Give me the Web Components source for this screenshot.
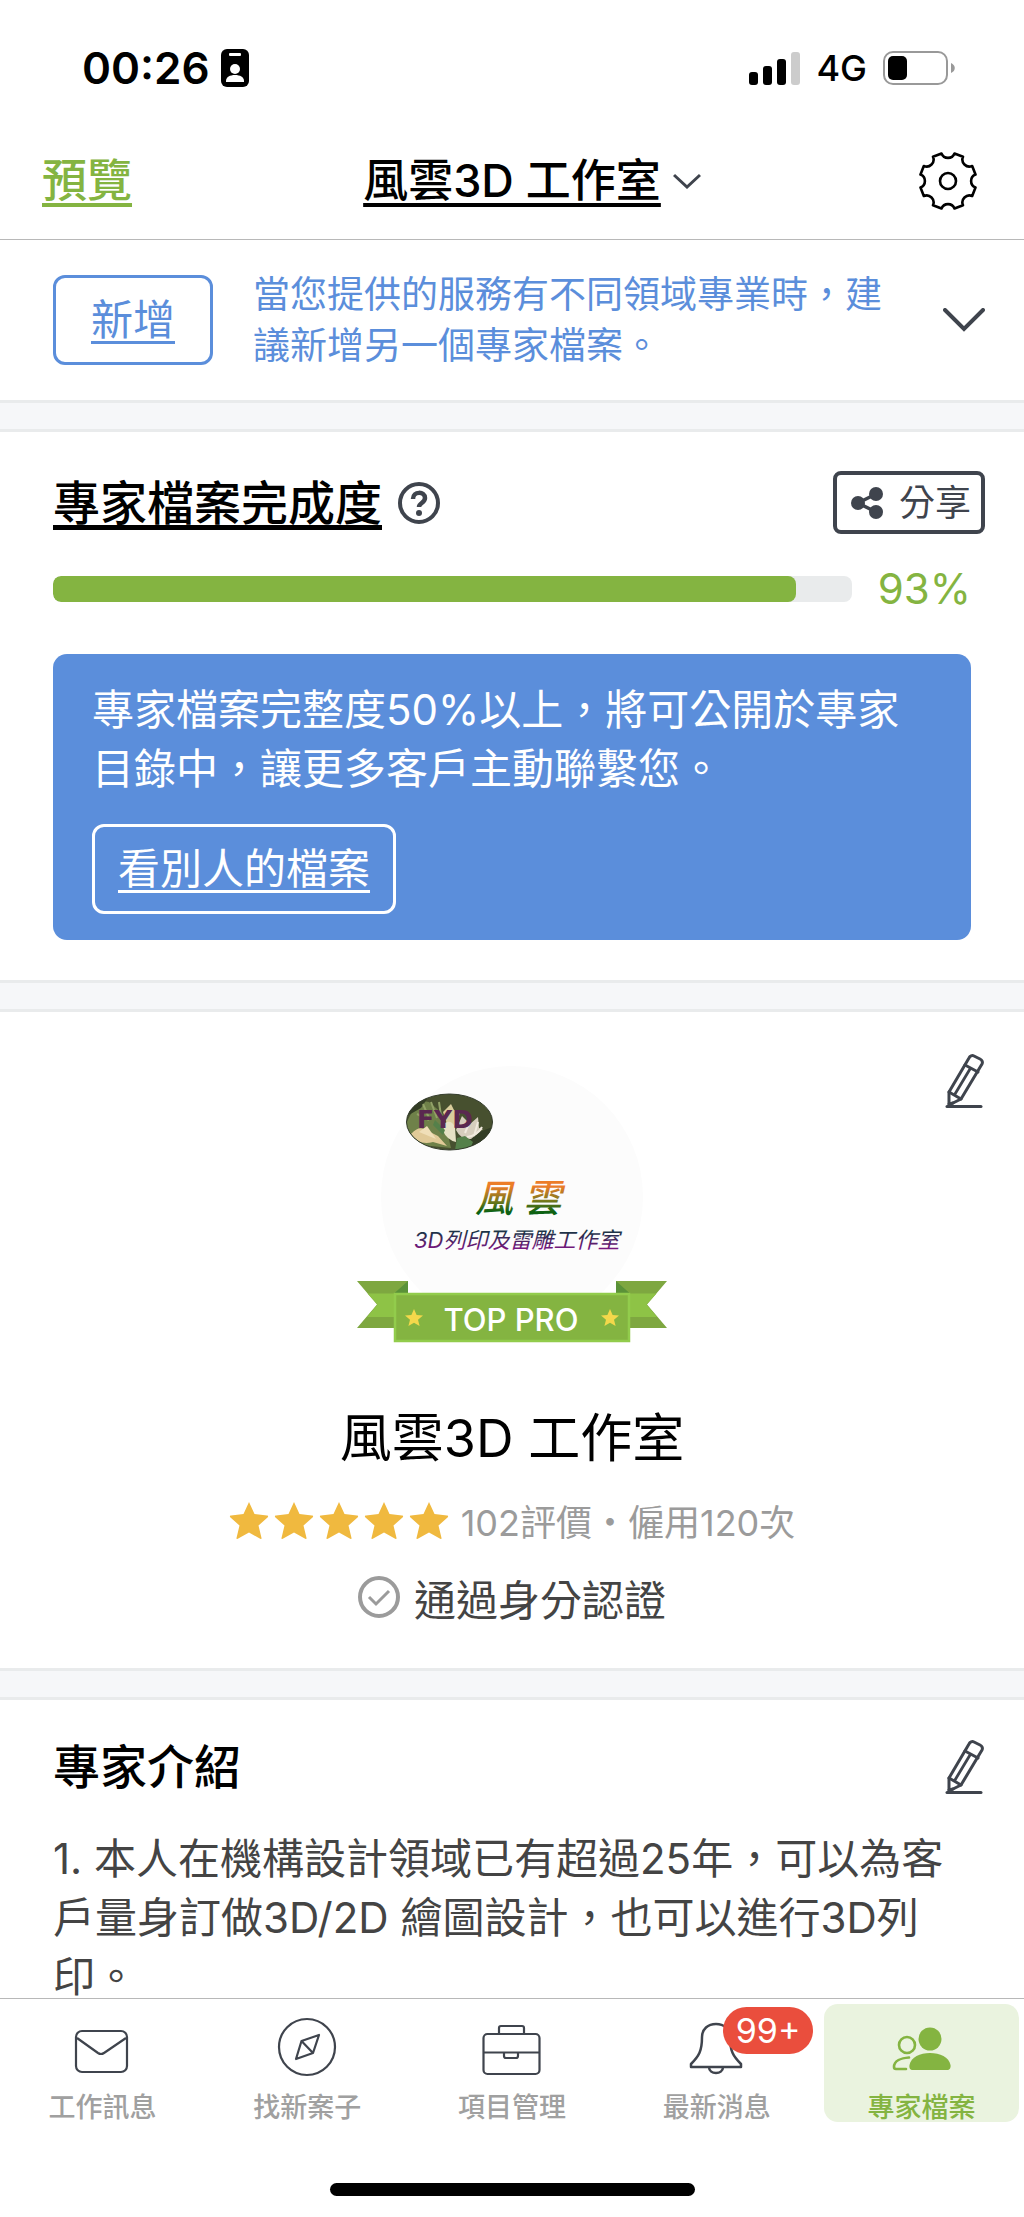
<!DOCTYPE html>
<html lang="zh-Hant">
<head>
<meta charset="utf-8">
<meta name="viewport" content="width=device-width, initial-scale=1">
<title>專家檔案</title>
<style>
    :root {
        --green: #84b441;
        --blue: #5b8edb;
        --dark: #3f444d;
        --text: #444;
        --muted: #9b9b9b;
    }
    body {
        margin: 0;
        background: #fff;
        color: #000;
        font-family: Inter, "Noto Sans CJK TC", sans-serif;
    }
</style>
</head>
<body>
<pro-app></pro-app>

<script>
// 圖示：[寬, 高, 內容]
const ICONS = {
    badge: [28, 38, `
        <rect width="28" height="38" rx="6" fill="#000"/>
        <rect x="8" y="4" width="12" height="3" rx="1" fill="#fff"/>
        <ellipse cx="14" cy="20" rx="5" ry="5" fill="#fff"/>
        <path d="M5 33v-1c0-4 4-6 9-6s9 2 9 6v1z" fill="#fff"/>`],
    signal: [51, 33, `
        <rect y="20" width="9" height="13" rx="3"/>
        <rect x="14" y="14" width="9" height="19" rx="3"/>
        <rect x="28" y="7" width="9" height="26" rx="3"/>
        <rect x="42" y="0" width="9" height="33" rx="3" fill="#ccc"/>`],
    battery: [72, 34, `
        <rect x="1" y="1" width="63" height="32" rx="9" fill="none" stroke="#999" stroke-width="2"/>
        <rect x="5" y="5" width="19" height="24" rx="5"/>
        <path d="M68 12c5 2 5 8 0 10z" fill="#999"/>`],
    chevron: [28, 16, `<path d="M1 2l13 12L27 2" fill="none" stroke="#3f444d" stroke-width="3"/>`],
    chevronBig: [42, 24, `<path d="M2 2l19 19L40 2" fill="none" stroke="#3f444d" stroke-width="4" stroke-linecap="round"/>`],
    gear: [58, 58, `
        <g transform="translate(29 29)" fill="none" stroke="#000" stroke-width="2.6" stroke-linejoin="round">
            <path d="M6.5-27.5L15-24.2A7 7 0 0 0 24.2-15L27.5-6.5A7 7 0 0 0 27.5 6.5L24.2 15A7 7 0 0 0 15 24.2L6.5 27.5A7 7 0 0 0-6.5 27.5L-15 24.2A7 7 0 0 0-24.2 15L-27.5 6.5A7 7 0 0 0-27.5-6.5L-24.2-15A7 7 0 0 0-15-24.2L-6.5-27.5A7 7 0 0 0 6.5-27.5z"/>
            <circle r="8"/>
        </g>`],
    help: [42, 42, `
        <circle cx="21" cy="21" r="19" fill="none" stroke="#3f444d" stroke-width="4"/>
        <path d="M15 17c0-8 12-8 12-1 0 5-6 5-6 9" fill="none" stroke="#3f444d" stroke-width="4.5"/>
        <circle cx="21" cy="31" r="3" fill="#3f444d"/>`],
    share: [32, 34, `
        <path d="M25 8L7 17l18 9" fill="none" stroke="#3f444d" stroke-width="3.5"/>
        <g fill="#3f444d"><circle cx="7" cy="17" r="7"/><circle cx="25" cy="8" r="7"/><circle cx="25" cy="26" r="7"/></g>`],
    pencil: [40, 54, `
        <g fill="none" stroke="#3f444d" stroke-width="3" stroke-linejoin="round" stroke-linecap="round">
            <path d="M4 51V38L24 4c1-2 3-3 5-2l6 3c2 1 3 3 2 5L16 45z"/>
            <path d="M20 11l13 7M4 38l12 7M4 50l4-1"/>
            <path d="M10 40l15-25" stroke-width="2.800"/>
            <path d="M2 52.500h34"/>
        </g>`],
    star: [40, 38, `<path d="M20 1l5.500 12L38 14.500c1 0 1.500 1 .8 1.700L29.500 24.500 32.500 37c.2 1-.5 1.300-1.300.8L20 31.500 8.800 37.800c-.8.500-1.500.2-1.300-.8l3-12.500L1.200 16.200C.5 15.500 1 14.500 2 14.500L14.500 13z" fill="#f0b93f"/>`],
    check: [42, 42, `
        <g fill="none" stroke="#9b9b9b" stroke-width="4"><circle cx="21" cy="21" r="19"/></g>
        <path d="M11 21l7 7 13-13" fill="none" stroke="#9b9b9b" stroke-width="3"/>`],
    mail: [60, 60, `
        <g fill="none" stroke="#3f444d" stroke-width="2.200">
            <rect x="4" y="14" width="51" height="41" rx="6"/>
            <path d="M5 21l21 15q3 2 6 0l22-15"/>
        </g>`],
    compass: [60, 60, `
        <g fill="none" stroke="#3f444d" stroke-width="2.200" stroke-linejoin="round">
            <circle cx="30" cy="30" r="28"/>
            <path d="M42 18l-6 18-17 6 5.500-18zM24.500 24L36 36"/>
        </g>`],
    briefcase: [60, 60, `
        <g fill="none" stroke="#3f444d" stroke-width="2.200">
            <rect x="1.500" y="17" width="56" height="40" rx="4"/>
            <path d="M17 17v-6q0-2 2-2h21q2 0 2 2v6M2 35.500h56M22 36v3q0 2 2 2h10q2 0 2-2v-3"/>
        </g>`],
    bell: [60, 60, `
        <g fill="none" stroke="#3f444d" stroke-width="2.500" stroke-linejoin="round">
            <path d="M15 20c0-8 6-13 14-13s14 5 14 13c0 14 3 19 11 27v3H4v-3c8-8 11-13 11-27z"/>
            <path d="M22 50c0 8 14 8 14 0"/>
        </g>`],
    people: [60, 60, `
        <g fill="#84b441"><circle cx="38" cy="22" r="11.500"/>
        <path d="M21 53c-3 0-4-2-3.500-5C19 40 28 36 38 36s19 4 20.500 12c.5 3-1 5-3.500 5z"/></g>
        <g fill="none" stroke="#84b441" stroke-width="2.600" stroke-linecap="round">
            <circle cx="15" cy="28" r="8"/>
            <path d="M17 40.500C9 41 2 44 2 50q0 2 2 2h10"/>
        </g>`]
};

class AppIcon extends HTMLElement {
    constructor() {
        super();
        this.attachShadow({ mode: 'open' });
    }

    connectedCallback() {
        const [w, h, body] = ICONS[this.getAttribute('name')];
        this.shadowRoot.innerHTML = `
            <style>
                :host { display: inline-flex; flex: none; }
                svg { display: block; }
            </style>
            <svg width="${w}" height="${h}" viewBox="0 0 ${w} ${h}" aria-hidden="true">${body}</svg>
        `;
    }
}
customElements.define('app-icon', AppIcon);

// 狀態列
class StatusBar extends HTMLElement {
    constructor() {
        super();
        this.attachShadow({ mode: 'open' });
        this.shadowRoot.innerHTML = `
            <style>
                :host {
                    display: flex;
                    justify-content: space-between;
                    align-items: center;
                    box-sizing: border-box;
                    height: 122px;
                    padding: 14px 69px 0 82px;
                }
                div { display: flex; align-items: center; gap: 16px; }
                .clock { gap: 11px; }
                .time { font-size: 44px; font-weight: 600; }
                .net { font-size: 36px; font-weight: 500; }
            </style>
            <div class="clock"><span class="time">00:26</span><app-icon name="badge"></app-icon></div>
            <div>
                <app-icon name="signal"></app-icon>
                <span class="net">4G</span>
                <app-icon name="battery"></app-icon>
            </div>
        `;
    }
}
customElements.define('status-bar', StatusBar);

// 頂部導覽
class NavBar extends HTMLElement {
    constructor() {
        super();
        this.attachShadow({ mode: 'open' });
        this.shadowRoot.innerHTML = `
            <style>
                :host {
                    display: grid;
                    grid-template-columns: 1fr auto 1fr;
                    align-items: center;
                    box-sizing: border-box;
                    height: 118px;
                    padding: 0 42px;
                    border-bottom: 1px solid #b8b8b8;
                }
                button {
                    padding: 0;
                    border: 0;
                    background: none;
                    color: inherit;
                    font: 500 45px/60px Inter, "Noto Sans CJK TC", sans-serif;
                    text-align: left;
                }
                .link {
                    text-decoration: underline 4px;
                    text-underline-offset: 6px;
                    text-decoration-skip-ink: none;
                }
                .preview { color: var(--green); justify-self: start; }
                .right { display: flex; justify-content: space-between; align-items: center; padding: 0 5px 0 12px; }
                .right button { display: flex; }
            </style>
            <button class="link preview">預覽</button>
            <button class="link">風雲3D 工作室</button>
            <div class="right">
                <button aria-label="切換檔案"><app-icon name="chevron"></app-icon></button>
                <button aria-label="設定"><app-icon name="gear"></app-icon></button>
            </div>
        `;
    }
}
customElements.define('nav-bar', NavBar);

// 外框按鈕，顏色跟隨文字色
class OutlineButton extends HTMLElement {
    constructor() {
        super();
        this.attachShadow({ mode: 'open' });
        this.shadowRoot.innerHTML = `
            <style>
                :host { display: inline-block; flex: none; }
                button {
                    box-sizing: border-box;
                    min-width: 160px;
                    height: 90px;
                    padding: 0 23px;
                    border: 3px solid currentColor;
                    border-radius: 12px;
                    background: none;
                    color: inherit;
                    font: 400 42px/60px Inter, "Noto Sans CJK TC", sans-serif;
                    text-decoration: underline 3px;
                    text-underline-offset: 6px;
                    text-decoration-skip-ink: none;
                }
            </style>
            <button><slot></slot></button>
        `;
    }
}
customElements.define('outline-button', OutlineButton);

class CardSection extends HTMLElement {
    constructor() {
        super();
        this.attachShadow({ mode: 'open' });
        this.shadowRoot.innerHTML = `
            <style>
                :host { display: block; }
                .body { padding: var(--pad-top, 40px) 39px var(--pad-bottom, 40px) 53px; }
                .band {
                    box-sizing: border-box;
                    height: 32px;
                    border: solid #e9ebec;
                    border-width: 3px 0;
                    background: #f6f7f9;
                }
                :host([last]) .band { display: none; }
            </style>
            <div class="body"><slot></slot></div>
            <div class="band"></div>
        `;
    }
}
customElements.define('card-section', CardSection);

// 完成度進度條
class ProgressMeter extends HTMLElement {
    constructor() {
        super();
        this.attachShadow({ mode: 'open' });
    }

    connectedCallback() {
        const value = this.getAttribute('value') || '0';
        this.shadowRoot.innerHTML = `
            <style>
                :host { display: flex; align-items: center; gap: 26px; }
                .track {
                    flex: 1;
                    height: 26px;
                    border-radius: 8px;
                    background: #e9ebec;
                    overflow: hidden;
                }
                .fill { width: ${value}%; height: 100%; border-radius: 8px; background: var(--green); }
                .value { min-width: 92px; color: var(--green); font-size: 42px; line-height: 42px; }
            </style>
            <div class="track" role="progressbar" aria-valuenow="${value}" aria-label="專家檔案完成度"><div class="fill"></div></div>
            <span class="value">${value}%</span>
        `;
    }
}
customElements.define('progress-meter', ProgressMeter);

// 頭像與 TOP PRO 緞帶
class ProAvatar extends HTMLElement {
    constructor() {
        super();
        this.attachShadow({ mode: 'open' });
        this.shadowRoot.innerHTML = `
            <style>
                :host { display: block; }
                svg { display: block; overflow: visible; }
                text { font-family: Inter, "Noto Sans CJK TC", sans-serif; }
                .mark { font-family: "DejaVu Sans", sans-serif; }
            </style>
            <svg width="310" height="276" viewBox="0 0 310 276">
                <defs>
                    <linearGradient id="warm" x1="0" y1="0" x2="0" y2="1">
                        <stop offset=".25" stop-color="#ec7d28"/><stop offset=".55" stop-color="#7c7a1c"/><stop offset=".8" stop-color="#0d6112"/>
                    </linearGradient>
                    <linearGradient id="cool" x1="0" y1="0" x2="0" y2="1">
                        <stop offset=".2" stop-color="#1d3346"/><stop offset=".85" stop-color="#7a1680"/>
                    </linearGradient>
                    <clipPath id="oval"><ellipse cx="92.500" cy="56" rx="43" ry="28"/></clipPath>
                    <path id="mini" d="M0-9l2.600 6 6.400.5-5 4.200L5.600 8 0 4.800-5.600 8-4 1.700l-5-4.200 6.400-.5z" fill="#f3d84b"/>
                </defs>
                <circle cx="155" cy="131" r="131" fill="#fcfcfc"/>
                <g clip-path="url(#oval)">
                    <rect x="49" y="27" width="88" height="58" fill="#47502f"/>
                    <path d="M49 58Q60 32 72 36l14 12 8 34-40-4z" fill="#6f8149"/>
                    <path d="M52 30h20l-8 12-14 8zM112 70l26-10v26h-30z" fill="#333d25"/>
                    <path d="M66 38l6 14M74 36l6 16M60 48l12 6M82 36l2 14" stroke="#92a268" stroke-width="2"/>
                    <path d="M86 46l8-8 3 6 6 1-2 10-8 12z" fill="#d9cd9c"/>
                    <path d="M54 68q8-9 15-4l12 6 9 10-14-4q-14 4-22-8z" fill="#e1ca98"/>
                    <path d="M62 66l8-6 9 13z" fill="#f0dfb8"/>
                    <path d="M88 57q6-4 10 4l1 15q-9-2-13-11z" fill="#e6e1c4"/>
                    <path d="M99 64l6-14 8 8 8-7 1 11 4 1-12 10q-10 1-15-9z" fill="#d6cdbd"/>
                    <path d="M110 71q10-1 15-10M108 67l5-12M117 70l4-14" stroke="#f0e9dd" stroke-width="2" fill="none"/>
                    <path d="M98 84l2-12 8-2 8 6-4 9zM78 54l10 10-2 5-10-10z" fill="#55804a"/>
                </g>
                <ellipse cx="92.500" cy="56" rx="43" ry="28" fill="none" stroke="#333b2b"/>
                <text class="mark" x="60" y="62" font-size="25" font-weight="700" fill="#5a2850">FYD</text>
                <text x="118" y="146" font-size="38" font-weight="500" font-style="italic" fill="url(#warm)">風 雲</text>
                <text x="57" y="182" font-size="22" font-weight="400" font-style="italic" fill="url(#cool)">3D列印及雷雕工作室</text>

                <path d="M0 215h51v47H0l20-23.500z" fill="#7ea740"/>
                <path d="M10.500 227.500H51V251H10l10.500-12.500z" fill="#8ec346"/>
                <path d="M310 215h-51v47h51l-20-23.500z" fill="#7ea740"/>
                <path d="M299.500 227.500H259V251h41l-10.500-12.500z" fill="#8ec346"/>
                <path d="M51 215v12.500H37zM259 215v12.500h14z" fill="#5a9238"/>
                <rect x="38" y="228" width="234" height="47" fill="#84b441" stroke="#92cc4c" stroke-width="2.500"/>
                <use href="#mini" x="57" y="252"/>
                <use href="#mini" x="253" y="252"/>
                <text x="154" y="265" font-size="31" font-weight="500" fill="#fff" text-anchor="middle">TOP PRO</text>
            </svg>
        `;
    }
}
customElements.define('pro-avatar', ProAvatar);

// 底部分頁
class TabItem extends HTMLElement {
    constructor() {
        super();
        this.attachShadow({ mode: 'open' });
    }

    connectedCallback() {
        const count = this.getAttribute('count');
        this.shadowRoot.innerHTML = `
            <style>
                :host { display: block; flex: 1; padding: 5px 5px 0; color: #a0a0a0; }
                a {
                    display: flex;
                    flex-direction: column;
                    align-items: center;
                    gap: 17px;
                    padding-top: 13px;
                    border-radius: 14px;
                    color: inherit;
                    font-size: 27px;
                    font-weight: 500;
                    line-height: 28px;
                    text-decoration: none;
                }
                :host([active]) { color: var(--green); }
                :host([active]) a { background: #eaf3df; }
                .icon { position: relative; display: flex; }
                .count {
                    position: absolute;
                    left: 36px;
                    top: -10px;
                    padding: 0 13px;
                    border-radius: 24px;
                    background: #ea4e3d;
                    color: #fff;
                    font-size: 34px;
                    font-weight: 400;
                    line-height: 47px;
                }
            </style>
            <a href="#">
                <span class="icon">
                    <app-icon name="${this.getAttribute('icon')}"></app-icon>
                    ${count ? `<span class="count">${count}</span>` : ''}
                </span>
                <slot></slot>
            </a>
        `;
    }
}
customElements.define('tab-item', TabItem);

class TabBar extends HTMLElement {
    constructor() {
        super();
        this.attachShadow({ mode: 'open' });
        this.shadowRoot.innerHTML = `
            <style>
                :host { display: block; flex: none; border-top: 1px solid #b8b8b8; background: #fff; }
                nav { display: flex; }
                .home {
                    width: 365px;
                    height: 13px;
                    margin: 61px auto 21px;
                    border-radius: 7px;
                    background: #000;
                }
            </style>
            <nav><slot></slot></nav>
            <div class="home"></div>
        `;
    }
}
customElements.define('tab-bar', TabBar);

// 整個畫面
class ProApp extends HTMLElement {
    constructor() {
        super();
        this.attachShadow({ mode: 'open' });
        this.shadowRoot.innerHTML = `
            <style>
                :host { display: flex; flex-direction: column; height: 100vh; }
                main { flex: 1; min-height: 0; overflow-y: auto; scrollbar-width: none; }
                h1, h2, p { margin: 0; font-weight: 400; }
                h2 { font-size: 47px; font-weight: 500; line-height: 54px; }
                h2.underlined {
                    text-decoration: underline 5px;
                    text-underline-offset: 5px;
                    text-decoration-skip-ink: none;
                }
                p { font-size: 42px; line-height: 59px; }
                .icon-button { display: flex; padding: 0; border: 0; background: none; }

                .add { --pad-top: 29px; --pad-bottom: 29px; color: var(--blue); }
                .add-row { display: flex; align-items: center; gap: 40px; }
                .add-row p { flex: 1; font-size: 37px; line-height: 51px; }

                .completion { --pad-top: 39px; }
                .head { display: flex; align-items: center; gap: 16px; }
                .head > :last-child { margin-left: auto; }
                .share {
                    display: flex;
                    align-items: center;
                    gap: 16px;
                    box-sizing: border-box;
                    height: 63px;
                    padding: 0 10px 0 14px;
                    border: 4px solid var(--dark);
                    border-radius: 8px;
                    background: none;
                    color: var(--dark);
                    font: 400 36px/50px Inter, "Noto Sans CJK TC", sans-serif;
                }
                progress-meter { margin: 34px 14px 44px 0; }
                .tip {
                    display: flex;
                    flex-direction: column;
                    align-items: flex-start;
                    gap: 26px;
                    margin-right: 14px;
                    padding: 26px 39px;
                    border-radius: 14px;
                    background: var(--blue);
                    color: #fff;
                }

                .profile { --pad-top: 42px; --pad-bottom: 50px; }
                .top { display: grid; grid-template-columns: 1fr auto 1fr; margin-left: -14px; }
                .top pro-avatar { grid-column: 2; margin-top: 12px; }
                .top .icon-button { grid-column: 3; justify-self: end; align-self: start; }
                h1 { margin: 67px 0 0 -14px; font-size: 52px; line-height: 60px; text-align: center; }
                .row { display: flex; justify-content: center; align-items: center; height: 42px; margin-left: -14px; }
                .rating { gap: 12px; margin-top: 30px; color: var(--muted); font-size: 36px; }
                .stars { display: flex; gap: 5px; }
                .verified { gap: 14px; margin-top: 35px; color: var(--text); font-size: 42px; }

                .intro { margin: 35px 14px 0 0; color: var(--text); }
            </style>
            <status-bar></status-bar>
            <nav-bar></nav-bar>
            <main>
                <card-section class="add">
                    <div class="add-row">
                        <outline-button>新增</outline-button>
                        <p>當您提供的服務有不同領域專業時，建議新增另一個專家檔案。</p>
                        <button class="icon-button" aria-label="展開"><app-icon name="chevronBig"></app-icon></button>
                    </div>
                </card-section>

                <card-section class="completion">
                    <div class="head">
                        <h2 class="underlined">專家檔案完成度</h2>
                        <button class="icon-button" aria-label="說明"><app-icon name="help"></app-icon></button>
                        <button class="share"><app-icon name="share"></app-icon>分享</button>
                    </div>
                    <progress-meter value="93"></progress-meter>
                    <div class="tip">
                        <p>專家檔案完整度50%以上，將可公開於專家目錄中，讓更多客戶主動聯繫您。</p>
                        <outline-button>看別人的檔案</outline-button>
                    </div>
                </card-section>

                <card-section class="profile">
                    <div class="top">
                        <pro-avatar></pro-avatar>
                        <button class="icon-button" aria-label="編輯檔案"><app-icon name="pencil"></app-icon></button>
                    </div>
                    <h1>風雲3D 工作室</h1>
                    <div class="row rating">
                        <span class="stars">
                            <app-icon name="star"></app-icon>
                            <app-icon name="star"></app-icon>
                            <app-icon name="star"></app-icon>
                            <app-icon name="star"></app-icon>
                            <app-icon name="star"></app-icon>
                        </span>
                        <span>102評價・僱用120次</span>
                    </div>
                    <div class="row verified">
                        <app-icon name="check"></app-icon>
                        <span>通過身分認證</span>
                    </div>
                </card-section>

                <card-section last>
                    <div class="head">
                        <h2>專家介紹</h2>
                        <button class="icon-button" aria-label="編輯介紹"><app-icon name="pencil"></app-icon></button>
                    </div>
                    <p class="intro">1. 本人在機構設計領域已有超過25年，可以為客戶量身訂做3D/2D 繪圖設計，也可以進行3D列印。</p>
                </card-section>
            </main>
            <tab-bar>
                <tab-item icon="mail">工作訊息</tab-item>
                <tab-item icon="compass">找新案子</tab-item>
                <tab-item icon="briefcase">項目管理</tab-item>
                <tab-item icon="bell" count="99+">最新消息</tab-item>
                <tab-item icon="people" active>專家檔案</tab-item>
            </tab-bar>
        `;
    }
}
customElements.define('pro-app', ProApp);
</script>
</body>
</html>
